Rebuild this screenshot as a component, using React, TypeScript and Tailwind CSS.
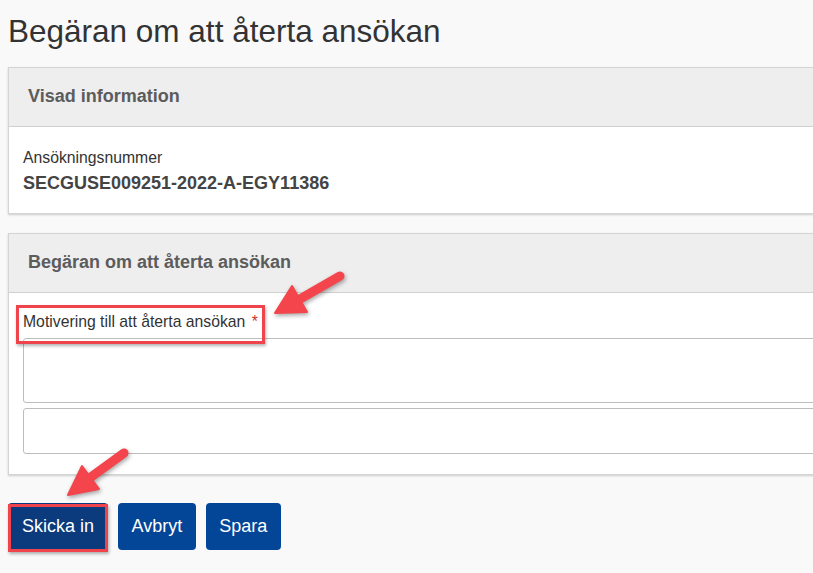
import React from "react";

const font = { fontFamily: '"Liberation Sans", Arial, sans-serif' };

const Arrow = ({ tail, tip, b1, b2, base }: { tail: number[]; tip: number[]; b1: number[]; b2: number[]; base: number[] }) => (
  <g>
    <line x1={tail[0]} y1={tail[1]} x2={base[0]} y2={base[1]} stroke="#f4444c" strokeWidth={9} strokeLinecap="round" />
    <polygon points={`${tip[0]},${tip[1]} ${b1[0]},${b1[1]} ${b2[0]},${b2[1]}`} fill="#f4444c" stroke="#f4444c" strokeWidth={2} strokeLinejoin="round" />
  </g>
);

const Panel = ({ title, children }: { title: string; children: React.ReactNode }) => (
  <div className="w-[900px] border border-[#d4d4d4] bg-white shadow-[0_1px_2px_rgba(0,0,0,0.18)]">
    <div className="flex h-[59px] items-center border-b border-[#d0d0d0] bg-[#eeeeee] px-[19px]">
      <h2 className="text-[18px] font-bold text-[#5c5c5c]">{title}</h2>
    </div>
    {children}
  </div>
);

export default function App() {
  return (
    <div className="relative min-h-screen w-full overflow-hidden bg-[#f9f9f9] px-[8px] pt-[14px]" style={font}>
      <h1 className="text-[31.5px] leading-[1.1] text-[#333333]">Begäran om att återta ansökan</h1>

      <div className="mt-[18px]">
        <Panel title="Visad information">
          <div className="px-[14px] pb-[18px] pt-[20px]">
            <div className="text-[15.75px] leading-[22px] text-[#333333]">Ansökningsnummer</div>
            <div className="mt-[2px] text-[18px] font-bold leading-[24px] text-[#444444]">SECGUSE009251-2022-A-EGY11386</div>
          </div>
        </Panel>
      </div>

      <div className="mt-[19px]">
        <Panel title="Begäran om att återta ansökan">
          <div className="px-[14px] pb-[20px] pt-[18px]">
            <label className="block text-[15.75px] leading-[22px] text-[#333333]">
              Motivering till att återta ansökan <span className="ml-[2px] text-[#d0312d]">*</span>
            </label>
            <textarea className="mt-[5px] block h-[65px] w-full resize-none rounded-[3px] border border-[#bdbdbd] bg-white" />
            <textarea className="mt-[5px] block h-[46px] w-full resize-none rounded-[3px] border border-[#bdbdbd] bg-white" />
          </div>
        </Panel>
      </div>

      <div className="mt-[28px] flex gap-[10px]">
        <button className="h-[48px] rounded-[4px] bg-[#0b3b7d] px-[14px] text-[18px] text-white">Skicka in</button>
        <button className="h-[47px] rounded-[4px] bg-[#034597] px-[13.5px] text-[18px] text-white">Avbryt</button>
        <button className="h-[47px] rounded-[4px] bg-[#034597] px-[13.5px] text-[18px] text-white">Spara</button>
      </div>

      {/* annotation overlay */}
      <div className="pointer-events-none absolute left-[16px] top-[305px] h-[39px] w-[249px] border-[3px] border-[#ef444c] shadow-[1px_2px_3px_rgba(0,0,0,0.3)]" />
      <div className="pointer-events-none absolute left-[8px] top-[504px] h-[48px] w-[100px] border-[3px] border-[#ef444c] shadow-[1px_2px_3px_rgba(0,0,0,0.3)]" />
      <svg className="pointer-events-none absolute left-0 top-0" width={813} height={573} style={{ filter: "drop-shadow(1px 2px 2px rgba(0,0,0,0.35))" }}>
        <Arrow tail={[340, 276]} base={[300, 299]} tip={[275, 313]} b1={[307, 312]} b2={[292, 286]} />
        <Arrow tail={[124, 453]} base={[91, 477]} tip={[68, 495]} b1={[99, 489]} b2={[82, 466]} />
      </svg>
    </div>
  );
}
